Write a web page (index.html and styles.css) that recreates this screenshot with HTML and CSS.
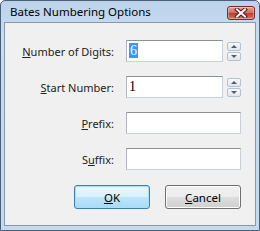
FILE: index.html
```html
<!DOCTYPE html>
<html lang="en">
<head>
    <meta charset="UTF-8">
    <title>Bates Numbering Options</title>
    <link rel="stylesheet" href="styles.css">
</head>
<body>
    <div class="window">
        <div class="titlebar">
            <span class="title">Bates Numbering Options</span>
            <button class="close" title="Close">
                <svg width="14" height="10" viewBox="0 0 14 10">
                    <path d="M3 1.5 L11 8.5 M11 1.5 L3 8.5" stroke="#5a1a14" stroke-width="4" stroke-linecap="square"/>
                    <path d="M3 1.5 L11 8.5 M11 1.5 L3 8.5" stroke="#fff" stroke-width="2" stroke-linecap="square"/>
                </svg>
            </button>
        </div>

        <div class="content">
            <!-- number of digits -->
            <div class="row">
                <label><u>N</u>umber of Digits:</label>
                <div class="field">
                    <div class="textbox short"><span class="sel">6</span></div>
                    <div class="spin">
                        <div class="spin-btn"><span class="up"></span></div>
                        <div class="spin-btn"><span class="down"></span></div>
                    </div>
                </div>
            </div>

            <!-- start number -->
            <div class="row">
                <label><u>S</u>tart Number:</label>
                <div class="field">
                    <div class="textbox short">1</div>
                    <div class="spin">
                        <div class="spin-btn"><span class="up"></span></div>
                        <div class="spin-btn"><span class="down"></span></div>
                    </div>
                </div>
            </div>

            <div class="row">
                <label><u>P</u>refix:</label>
                <div class="field">
                    <div class="textbox"></div>
                </div>
            </div>

            <div class="row">
                <label>S<u>u</u>ffix:</label>
                <div class="field">
                    <div class="textbox"></div>
                </div>
            </div>

            <div class="buttons">
                <button class="btn default"><u>O</u>K</button>
                <button class="btn"><u>C</u>ancel</button>
            </div>
        </div>
    </div>
</body>
</html>
```

FILE: styles.css
```css
body {
    margin: 0;
    padding: 0;
    background: #fff;
    font-family: "Noto Sans", "DejaVu Sans", sans-serif;
    font-size: 11px;
    color: #000;
}
.window {
    width: 260px;
    height: 231px;
    box-sizing: border-box;
    border: 1px solid #4a5f78;
    border-radius: 5px 5px 0 0;
    background: linear-gradient(#bcd2e9, #c8dcf0 30px, #c5daef);
    padding: 0 3px 4px 3px;
    display: flex;
    flex-direction: column;
}
.titlebar {
    height: 21px;
    display: flex;
    align-items: center;
    justify-content: space-between;
    padding-left: 6px;
    padding-right: 1px;
}
.title {
    font-size: 11.5px;
    color: #000;
}
.close {
    width: 28px;
    height: 14px;
    padding: 0;
    margin-top: 2px;
    border: 1px solid #7a2a22;
    border-radius: 3px;
    background: linear-gradient(#e3a597, #d0695a 50%, #bc3b2a 51%, #d7765f);
    box-shadow: inset 0 0 0 1px rgba(255, 255, 255, 0.35);
    display: flex;
    align-items: center;
    justify-content: center;
}
.content {
    flex: 1;
    background: #f0f0f0;
    border: 1px solid #8798ad;
    padding: 17px 14px 0 0;
    display: flex;
    flex-direction: column;
    gap: 14px;
}
.row {
    display: flex;
    align-items: center;
    height: 22px;
}
.row label {
    flex: 1;
    text-align: right;
    margin-right: 12px;
    color: #222;
}
.field {
    width: 115px;
    display: flex;
    gap: 4px;
}
.textbox {
    flex: 1;
    height: 22px;
    box-sizing: border-box;
    background: #fff;
    border: 1px solid #c9d0d8;
    border-top-color: #8e9196;
    border-left-color: #b4b8be;
    font-family: "Liberation Serif", serif;
    font-size: 14px;
    line-height: 20px;
    padding-left: 2px;
}
.sel {
    background: #3399ff;
    color: #fff;
    padding: 0 1px;
}
.spin {
    width: 14px;
    display: flex;
    flex-direction: column;
    justify-content: center;
    gap: 1px;
}
.spin-btn {
    height: 9px;
    box-sizing: border-box;
    border: 1px solid #b3c2d3;
    border-radius: 2px;
    background: linear-gradient(#f8f8f8, #e2e6ea);
    display: flex;
    align-items: center;
    justify-content: center;
}
.up, .down {
    width: 0;
    height: 0;
    border-left: 3px solid transparent;
    border-right: 3px solid transparent;
}
.up {
    border-bottom: 3px solid #42607e;
}
.down {
    border-top: 3px solid #42607e;
}
.buttons {
    display: flex;
    justify-content: flex-end;
    gap: 15px;
    margin-top: 1px;
}
.btn {
    width: 76px;
    height: 24px;
    font-family: "Noto Sans", "DejaVu Sans", sans-serif;
    font-size: 11.5px;
    color: #000;
    border: 1px solid #707070;
    border-radius: 3px;
    background: linear-gradient(#f2f2f2, #ebebeb 50%, #dddddd 51%, #cfcfcf);
    box-shadow: inset 0 0 0 1px #fcfcfc;
}
.btn.default {
    border-color: #3c7fb1;
    background: linear-gradient(#eaf6fd, #d9f0fc 50%, #bee6fd 51%, #a7d9f5);
    box-shadow: inset 0 0 0 1px #a8dff9;
}
```
